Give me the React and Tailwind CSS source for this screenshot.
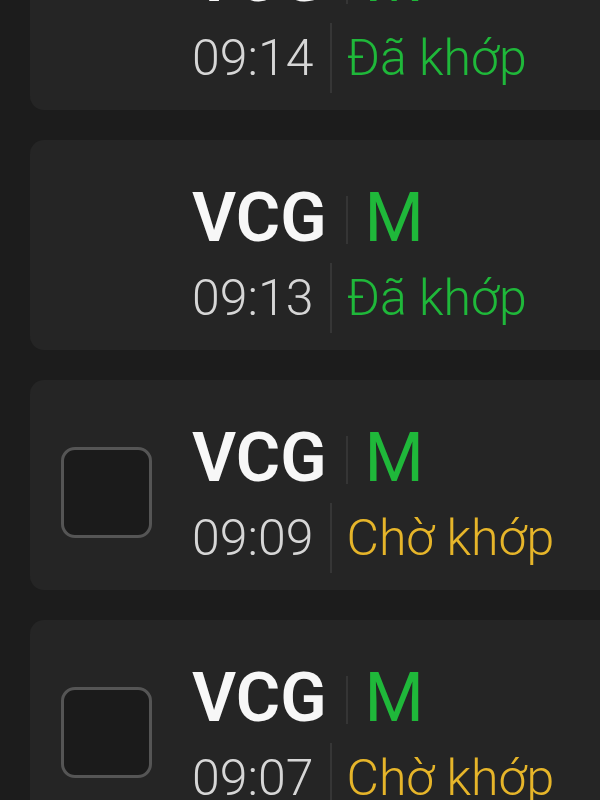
const orders = [
  { symbol: 'VCG', side: 'M', time: '09:14', status: 'Đã khớp', filled: true },
  { symbol: 'VCG', side: 'M', time: '09:13', status: 'Đã khớp', filled: true },
  { symbol: 'VCG', side: 'M', time: '09:09', status: 'Chờ khớp', filled: false },
  { symbol: 'VCG', side: 'M', time: '09:07', status: 'Chờ khớp', filled: false },
];

const OrderCard = ({ order }) => (
  <div className="flex items-start h-[210px] shrink-0 rounded-l-[14px] bg-[#252525] pl-[31px] pt-[44px]">
    <div
      className={`mt-[23px] w-[91px] h-[91px] shrink-0 rounded-[14px] ${
        order.filled ? 'invisible' : 'border-[3px] border-[#555555] bg-[#1b1b1b]'
      }`}
    />
    <div className="ml-[40px] flex flex-col gap-[11px]">
      <div className="flex items-center h-[68px] text-[68px] leading-[68px]">
        <span className="font-semibold text-[#f7f7f7]">{order.symbol}</span>
        <span className="ml-[19px] mr-[17px] w-[2px] h-[48px] mt-[4px] bg-[#353535]" />
        <span className="font-normal text-[#1fb83a]">{order.side}</span>
      </div>
      <div className="flex items-stretch h-[70px] text-[50px] leading-[70px] font-light">
        <span className="text-[#d6d6d6]">{order.time}</span>
        <span className="ml-[17px] mr-[14px] w-[2px] bg-[#363636]" />
        <span className={order.filled ? 'text-[#1fb83a]' : 'text-[#e6b52a]'}>{order.status}</span>
      </div>
    </div>
  </div>
);

export default function App() {
  return (
    <div
      className="w-[600px] h-[800px] overflow-hidden bg-[#1c1c1c]"
      style={{ fontFamily: 'Roboto, "Noto Sans", sans-serif' }}
    >
      <div className="-mt-[100px] ml-[30px] flex flex-col gap-[30px]">
        {orders.map((o, i) => (
          <OrderCard key={i} order={o} />
        ))}
      </div>
    </div>
  );
}
